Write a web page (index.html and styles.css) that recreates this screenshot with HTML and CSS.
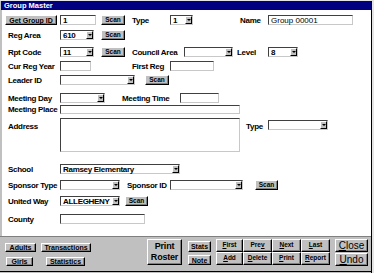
FILE: index.html
```html
<!DOCTYPE html>
<html lang="en">
<head>
    <meta charset="UTF-8">
    <title>Group Master</title>
    <link rel="stylesheet" href="styles.css">
</head>
<body>
    <div class="window">
        <div class="titlebar">Group Master</div>

        <!-- Form fields -->
        <div class="form">
            <div class="row">
                <button class="btn w-52">Get Group ID</button>
                <div class="field w-36 ml-3">1</div>
                <button class="btn scan ml-5">Scan</button>
                <span class="lbl w-38 ml-7">Type</span>
                <div class="select w-23"><span class="val">1</span><span class="arrow"></span></div>
                <span class="lbl w-28 ml-47">Name</span>
                <div class="field w-85 plain">Group 00001</div>
            </div>

            <div class="row mt-5">
                <span class="lbl lbl-col">Reg Area</span>
                <div class="select w-34"><span class="val">610</span><span class="arrow"></span></div>
                <button class="btn scan ml-7">Scan</button>
            </div>

            <div class="row mt-7">
                <span class="lbl lbl-col">Rpt Code</span>
                <div class="select w-34"><span class="val">11</span><span class="arrow"></span></div>
                <button class="btn scan ml-7">Scan</button>
                <span class="lbl w-52 ml-7">Council Area</span>
                <div class="select w-49"><span class="val"></span><span class="arrow"></span></div>
                <span class="lbl w-31 ml-4">Level</span>
                <div class="select w-30"><span class="val">8</span><span class="arrow"></span></div>
            </div>

            <div class="row mt-4">
                <span class="lbl lbl-col">Cur Reg Year</span>
                <div class="field w-31"></div>
                <span class="lbl w-38 ml-41">First Reg</span>
                <div class="field w-44"></div>
            </div>

            <div class="row mt-4">
                <span class="lbl lbl-col">Leader ID</span>
                <div class="select w-75"><span class="val"></span><span class="arrow"></span></div>
                <button class="btn scan ml-10">Scan</button>
            </div>

            <div class="row mt-8">
                <span class="lbl lbl-col">Meeting Day</span>
                <div class="select w-45"><span class="val"></span><span class="arrow"></span></div>
                <span class="lbl w-58 ml-17">Meeting Time</span>
                <div class="field w-39"></div>
            </div>

            <div class="row short mt-2">
                <span class="lbl lbl-col">Meeting Place</span>
                <div class="field w-180 short"></div>
            </div>

            <div class="row tall mt-4">
                <span class="lbl lbl-col mt-4">Address</span>
                <div class="memo w-180"></div>
                <span class="lbl w-22 ml-6 mt-4">Type</span>
                <div class="select w-60 mt-2"><span class="val"></span><span class="arrow"></span></div>
            </div>

            <div class="row mt-12">
                <span class="lbl lbl-col">School</span>
                <div class="select w-120"><span class="val">Ramsey Elementary</span><span class="arrow"></span></div>
            </div>

            <div class="row mt-6">
                <span class="lbl lbl-col">Sponsor Type</span>
                <div class="select w-60"><span class="val"></span><span class="arrow"></span></div>
                <span class="lbl w-43 ml-7">Sponsor ID</span>
                <div class="select w-73"><span class="val"></span><span class="arrow"></span></div>
                <button class="btn scan w-23 ml-12">Scan</button>
            </div>

            <div class="row mt-6">
                <span class="lbl lbl-col">United Way</span>
                <div class="select w-60"><span class="val">ALLEGHENY</span><span class="arrow"></span></div>
                <button class="btn scan w-23 ml-5">Scan</button>
            </div>

            <div class="row mt-8">
                <span class="lbl lbl-col">County</span>
                <div class="field w-85"></div>
            </div>
        </div>

        <!-- Command buttons -->
        <div class="buttonbar">
            <div class="links">
                <div class="link-row">
                    <button class="btn small w-31">Adults</button>
                    <button class="btn small w-50 ml-5">Transactions</button>
                </div>
                <div class="link-row mt-5">
                    <button class="btn small w-27 ml-1">Girls</button>
                    <button class="btn small w-39 ml-13">Statistics</button>
                </div>
            </div>

            <button class="btn print">Print<br>Roster</button>

            <div class="stack stats">
                <button class="btn stat">Stats</button>
                <button class="btn note"><u>N</u>ote</button>
            </div>

            <div class="nav">
                <button class="btn"><u>F</u>irst</button>
                <button class="btn">Pre<u>v</u></button>
                <button class="btn"><u>N</u>ext</button>
                <button class="btn"><u>L</u>ast</button>
                <button class="btn"><u>A</u>dd</button>
                <button class="btn"><u>D</u>elete</button>
                <button class="btn"><u>P</u>rint</button>
                <button class="btn"><u>R</u>eport</button>
            </div>

            <div class="stack closers">
                <button class="btn big"><u>C</u>lose</button>
                <button class="btn big"><u>U</u>ndo</button>
            </div>
        </div>
    </div>
</body>
</html>
```

FILE: styles.css
```css
/* Old Windows style form */
body {
    margin: 0;
    background: #e4e4e4;
    font-family: "Liberation Sans", Arial, sans-serif;
    color: #000;
}

.window {
    width: 371px;
    height: 272px;
    background: #c0c0c0;
    border-right: 1px solid #000;
}

.titlebar {
    height: 9px;
    margin: 1px 0 0 1px;
    padding-left: 3px;
    background: #000080;
    color: #fff;
    font-size: 7.5px;
    font-weight: bold;
    line-height: 9px;
}

/* Form area */
.form {
    height: 226px;
    box-sizing: border-box;
    padding: 5px 0 0 3px;
    background: #fff;
    border-left: 2px solid #c0c0c0;
    display: flex;
    flex-direction: column;
}

.row {
    display: flex;
    align-items: center;
    height: 10px;
}

.row.short {
    height: 9px;
}

.row.tall {
    height: 34px;
    align-items: flex-start;
}

.lbl {
    flex: none;
    font-size: 8px;
    font-weight: bold;
    letter-spacing: -0.3px;
    white-space: nowrap;
}

.lbl-col {
    width: 55px;
    padding-left: 3px;
    box-sizing: border-box;
}

/* Sunken text boxes */
.field, .select, .memo {
    flex: none;
    box-sizing: border-box;
    height: 10px;
    background: #fff;
    border: 1px solid;
    border-color: #404040 #c8c8c8 #c8c8c8 #404040;
}

.field {
    display: flex;
    align-items: center;
    padding-left: 2px;
    font-size: 8px;
    font-weight: bold;
    letter-spacing: -0.3px;
}

.field.plain {
    font-weight: normal;
    letter-spacing: 0;
}

.field.short {
    height: 9px;
}

.memo {
    height: 34px;
}

.select {
    display: flex;
    align-items: center;
}

.select .val {
    flex: 1;
    padding-left: 2px;
    font-size: 8px;
    font-weight: bold;
    letter-spacing: -0.3px;
    white-space: nowrap;
    overflow: hidden;
}

.select .arrow {
    flex: none;
    position: relative;
    width: 7px;
    height: 8px;
    box-sizing: border-box;
    margin-right: 0;
    background: #c0c0c0;
    border: 1px solid;
    border-color: #fff #000 #000 #fff;
}

.select .arrow::after {
    content: "";
    position: absolute;
    left: 1px;
    top: 2px;
    border-left: 2px solid transparent;
    border-right: 2px solid transparent;
    border-top: 2px solid #000;
}

/* Raised buttons */
.btn {
    flex: none;
    box-sizing: border-box;
    height: 10px;
    margin: 0;
    padding: 0;
    background: #c0c0c0;
    border: 1px solid;
    border-color: #fff #000 #000 #fff;
    box-shadow: inset -1px -1px #808080;
    font-family: inherit;
    font-size: 7px;
    font-weight: bold;
    color: #000;
    line-height: 1;
    display: flex;
    align-items: center;
    justify-content: center;
    white-space: nowrap;
}

.btn u {
    text-decoration: underline;
}

.scan {
    width: 24px;
    font-size: 6.5px;
}

/* Bottom bar */
.buttonbar {
    height: 34px;
    padding-left: 5px;
    border-top: 1px solid #808080;
    border-bottom: 1px solid #000;
    display: flex;
    align-items: flex-start;
}

.links {
    margin-top: 6px;
}

.link-row {
    display: flex;
}

.btn.small {
    height: 9px;
}

.btn.print {
    width: 35px;
    height: 26px;
    margin: 2px 0 0 56px;
    font-size: 9px;
    line-height: 11px;
    letter-spacing: -0.2px;
    flex-direction: column;
}

.stack {
    display: flex;
    flex-direction: column;
}

.stats {
    width: 23px;
    margin: 4px 0 0 6px;
    gap: 3px;
}

.stats .btn {
    width: 23px;
}

.stat {
    height: 11px;
}

.nav {
    margin: 2px 0 0 5px;
    display: grid;
    grid-template-columns: 27px 29px 29px 29px;
    grid-auto-rows: 13px;
}

.nav .btn {
    height: 13px;
    font-size: 6.5px;
}

.closers {
    width: 33px;
    margin: 2px 0 0 5px;
    gap: 1px;
}

.btn.big {
    width: 33px;
    height: 13px;
    font-size: 10px;
    font-weight: normal;
}

/* Spacing and widths */
.mt-2 { margin-top: 2px; }
.mt-4 { margin-top: 4px; }
.mt-5 { margin-top: 5px; }
.mt-6 { margin-top: 6px; }
.mt-7 { margin-top: 7px; }
.mt-8 { margin-top: 8px; }
.mt-12 { margin-top: 12px; }

.ml-1 { margin-left: 1px; }
.ml-3 { margin-left: 3px; }
.ml-4 { margin-left: 4px; }
.ml-5 { margin-left: 5px; }
.ml-6 { margin-left: 6px; }
.ml-7 { margin-left: 7px; }
.ml-10 { margin-left: 10px; }
.ml-12 { margin-left: 12px; }
.ml-13 { margin-left: 13px; }
.ml-17 { margin-left: 17px; }
.ml-41 { margin-left: 41px; }
.ml-47 { margin-left: 47px; }

.w-22 { width: 22px; }
.w-23 { width: 23px; }
.w-27 { width: 27px; }
.w-28 { width: 28px; }
.w-30 { width: 30px; }
.w-31 { width: 31px; }
.w-34 { width: 34px; }
.w-36 { width: 36px; }
.w-38 { width: 38px; }
.w-39 { width: 39px; }
.w-43 { width: 43px; }
.w-44 { width: 44px; }
.w-45 { width: 45px; }
.w-49 { width: 49px; }
.w-50 { width: 50px; }
.w-52 { width: 52px; }
.w-58 { width: 58px; }
.w-60 { width: 60px; }
.w-73 { width: 73px; }
.w-75 { width: 75px; }
.w-85 { width: 85px; }
.w-120 { width: 120px; }
.w-180 { width: 180px; }
```
